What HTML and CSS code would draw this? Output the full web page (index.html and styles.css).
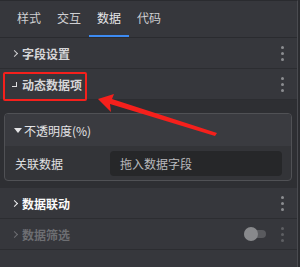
FILE: index.html
```html
<!DOCTYPE html>
<html lang="zh-CN">
<head>
    <meta charset="UTF-8">
    <title>数据面板</title>
    <link rel="stylesheet" href="styles.css">
</head>
<body>
    <div class="panel">
        <div class="tabs">
            <div class="tab">样式</div>
            <div class="tab">交互</div>
            <div class="tab active">数据</div>
            <div class="tab">代码</div>
        </div>

        <div class="row">
            <span class="chev"></span>
            <span class="title">字段设置</span>
            <span class="dots"><i></i><i></i><i></i></span>
        </div>

        <div class="row">
            <span class="corner"></span>
            <span class="title">动态数据项</span>
            <span class="dots"><i></i><i></i><i></i></span>
        </div>

        <div class="section">
            <div class="card">
                <div class="card-head">
                    <span class="tri"></span>
                    <span>不透明度(%)</span>
                </div>
                <div class="card-body">
                    <span class="field-label">关联数据</span>
                    <div class="drop">拖入数据字段</div>
                </div>
            </div>
        </div>

        <div class="row bright">
            <span class="chev"></span>
            <span class="title">数据联动</span>
            <span class="dots"><i></i><i></i><i></i></span>
        </div>

        <div class="row disabled">
            <span class="chev"></span>
            <span class="title">数据筛选</span>
            <span class="switch"><b></b></span>
            <span class="dots"><i></i><i></i><i></i></span>
        </div>

        <!-- annotation marks from the screenshot -->
        <div class="mark-box"></div>
        <svg class="mark-arrow" width="300" height="267" viewBox="0 0 300 267">
            <polygon points="98,99 114,94 112,99 217,133 215,136 110,104 111,112" fill="#f5201c"/>
        </svg>
    </div>
</body>
</html>
```

FILE: styles.css
```css
body {
    margin: 0;
    background-color: #2b2c30;
    font-family: "Noto Sans CJK SC", "Noto Sans", sans-serif;
    font-size: 12px;
    color: #d4d4d6;
}
.panel {
    position: relative;
    width: 298px;
    height: 267px;
    background-color: #36373c;
    border-top: 1px solid #2a2b2f;
    border-right: 1px solid #4a4b50;
    box-sizing: border-box;
}
.tabs {
    display: flex;
    height: 36px;
    padding-left: 9px;
    border-bottom: 1px solid #2a2b2f;
}
.tab {
    width: 40px;
    text-align: center;
    line-height: 34px;
    color: #cfcfd2;
    border-bottom: 2px solid transparent;
}
.tab.active {
    color: #e6e6e8;
    border-bottom-color: #3d8bf2;
}
.row {
    display: flex;
    align-items: center;
    height: 30px;
    padding-left: 12px;
    border-bottom: 1px solid #2c2d31;
}
.title {
    font-weight: bold;
    color: #d6d6d8;
    margin-left: 5px;
}
.row.bright .title {
    color: #fafafa;
}
.row.disabled .title {
    color: #6d6e72;
}
.chev {
    width: 4px;
    height: 4px;
    border-right: 1.5px solid #d0d0d2;
    border-bottom: 1.5px solid #d0d0d2;
    transform: rotate(-45deg);
}
.row.bright .chev {
    border-color: #f0f0f2;
}
.row.disabled .chev {
    border-color: #6d6e72;
}
.corner {
    width: 4px;
    height: 4px;
    margin-top: 1px;
    border-right: 1.5px solid #e0e0e2;
    border-bottom: 1.5px solid #e0e0e2;
}
.dots {
    display: flex;
    flex-direction: column;
    gap: 3px;
    margin-left: auto;
    margin-right: 13px;
}
.dots i {
    width: 3px;
    height: 3px;
    border-radius: 50%;
    background-color: #8b8c90;
}
.row.disabled .dots i {
    background-color: #5e5f63;
}
.switch {
    position: relative;
    width: 22px;
    height: 8px;
    border-radius: 4px;
    background-color: #595a5e;
    margin-left: auto;
    margin-right: 15px;
}
.switch b {
    position: absolute;
    left: 0;
    top: -3px;
    width: 14px;
    height: 14px;
    border-radius: 50%;
    background-color: #88898c;
}
.switch + .dots {
    margin-left: 0;
}
.section {
    background-color: #2e2f33;
    padding: 13px 5px 7px 4px;
}
.card {
    border: 1px solid #505155;
    border-radius: 4px;
    background-color: #333438;
    overflow: hidden;
}
.card-head {
    display: flex;
    align-items: center;
    height: 32px;
    padding-left: 9px;
    background-color: #3a3b40;
    color: #e4e4e6;
}
.tri {
    width: 0;
    height: 0;
    border-left: 4px solid transparent;
    border-right: 4px solid transparent;
    border-top: 5px solid #e4e4e6;
    margin-right: 2px;
}
.card-body {
    display: flex;
    align-items: center;
    height: 34px;
    padding: 0 9px 0 10px;
}
.field-label {
    width: 95px;
    color: #e0e0e2;
}
.drop {
    flex: 1;
    height: 25px;
    line-height: 25px;
    padding-left: 10px;
    border-radius: 4px;
    background-color: #262729;
    color: #b9b9bc;
}
.mark-box {
    position: absolute;
    left: 3px;
    top: 71px;
    width: 80px;
    height: 25px;
    border: 2px solid #f5201c;
    border-radius: 2px;
}
.mark-arrow {
    position: absolute;
    left: 0;
    top: -1px;
}
```
